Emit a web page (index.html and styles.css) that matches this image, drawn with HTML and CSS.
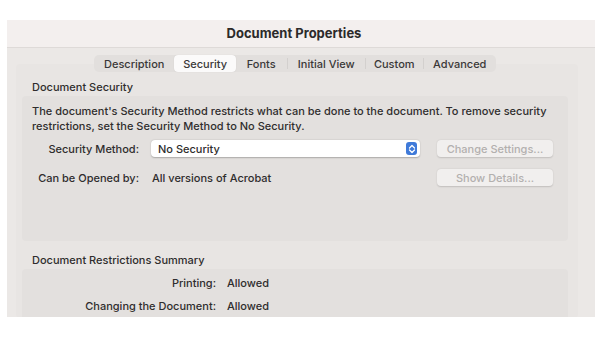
FILE: index.html
```html
<!DOCTYPE html>
<html lang="en">
  <head>
    <meta charset="UTF-8">
    <title>Document Properties</title>
    <link rel="stylesheet" href="styles.css">
  </head>
  <body>
    <div class="window">
      <div class="titlebar">Document Properties</div>

      <div class="tab-area">
        <div class="tabs">
          <div class="tab">Description</div>
          <div class="tab selected">Security</div>
          <div class="tab">Fonts</div>
          <div class="tab sep">Initial View</div>
          <div class="tab sep">Custom</div>
          <div class="tab sep">Advanced</div>
        </div>

        <div class="panel">
          <div class="section-title">Document Security</div>
          <div class="group security-group">
            <p class="note">The document's Security Method restricts what can be done to the document. To remove security restrictions, set the Security Method to No Security.</p>

            <div class="row">
              <span class="label">Security Method:</span>
              <div class="popup">
                <span>No Security</span>
                <span class="stepper">
                  <svg width="8" height="10" viewBox="0 0 8 10">
                    <path d="M1.5 4 L4 1.5 L6.5 4" fill="none" stroke="#fff" stroke-width="1.3" stroke-linecap="round" stroke-linejoin="round"/>
                    <path d="M1.5 6 L4 8.5 L6.5 6" fill="none" stroke="#fff" stroke-width="1.3" stroke-linecap="round" stroke-linejoin="round"/>
                  </svg>
                </span>
              </div>
              <button class="btn" disabled>Change Settings...</button>
            </div>

            <div class="row">
              <span class="label">Can be Opened by:</span>
              <span class="value">All versions of Acrobat</span>
              <button class="btn" disabled>Show Details...</button>
            </div>
          </div>

          <div class="section-title">Document Restrictions Summary</div>
          <div class="group summary-group">
            <div class="summary-row">
              <span class="summary-label">Printing:</span>
              <span>Allowed</span>
            </div>
            <div class="summary-row">
              <span class="summary-label">Changing the Document:</span>
              <span>Allowed</span>
            </div>
          </div>
        </div>
      </div>
    </div>
  </body>
</html>
```

FILE: styles.css
```css
body {
  margin: 0;
  background-color: #ffffff;
  font-family: Inter, "Liberation Sans", sans-serif;
  font-size: 11px;
  color: #2f2d2d;
}

.window {
  margin: 20px 0 0 7px;
  width: 588px;
  height: 297px;
  background-color: #ebe8e6;
  overflow: hidden;
}

.titlebar {
  height: 27px;
  line-height: 27px;
  padding-right: 14px;
  text-align: center;
  font-size: 13px;
  font-weight: 700;
  color: #2b2a2a;
  background-color: #f3efee;
  border-bottom: 1px solid #dedad8;
}

.tab-area {
  padding: 7px 17px 0 9px;
}

.tabs {
  position: relative;
  z-index: 1;
  display: flex;
  width: 402px;
  height: 17px;
  margin-left: 78px;
  background-color: #e2dfdd;
  border-radius: 5px;
}

.tab {
  display: flex;
  align-items: center;
  justify-content: center;
  font-weight: 500;
  color: #3a3838;
}

.tab:nth-child(1) { width: 81px; }
.tab:nth-child(2) { width: 62px; }
.tab:nth-child(3) { width: 51px; }
.tab:nth-child(4) { width: 78px; }
.tab:nth-child(5) { width: 57px; }
.tab:nth-child(6) { width: 73px; }

.tab.selected {
  background-color: #fbfafa;
  border-radius: 4px;
  box-shadow: 0 0 1px rgba(0, 0, 0, 0.15);
}

.tab.sep {
  border-left: 1px solid #d3d0ce;
  margin-top: 3px;
  margin-bottom: 3px;
}

.panel {
  margin-top: -8px;
  height: 240px;
  padding: 14px 10px 0 6px;
  background-color: #e8e5e3;
  border-radius: 4px;
}

.section-title {
  padding-left: 10px;
  height: 18px;
  line-height: 18px;
  font-weight: 500;
}

.group {
  background-color: #e3e0de;
  border-radius: 4px;
}

.security-group {
  height: 137px;
  padding: 8px 15px 0 10px;
  margin-bottom: 10px;
}

.note {
  margin: 0 0 6px 0;
  line-height: 15px;
  font-weight: 500;
}

.row {
  display: flex;
  align-items: center;
  height: 17px;
  margin-bottom: 12px;
  font-weight: 500;
}

.label {
  width: 107px;
  text-align: right;
  padding-right: 12px;
}

.value {
  width: 270px;
  padding-left: 1px;
}

.popup {
  display: flex;
  align-items: center;
  justify-content: space-between;
  width: 259px;
  height: 17px;
  padding: 0 3px 0 7px;
  background-color: #ffffff;
  border-radius: 4px;
  box-shadow: 0 0.5px 1.5px rgba(0, 0, 0, 0.25);
}

.stepper {
  display: flex;
  align-items: center;
  justify-content: center;
  width: 11px;
  height: 13px;
  background-color: #3f7ad9;
  border-radius: 3px;
}

.btn {
  margin-left: auto;
  width: 116px;
  height: 17px;
  padding: 0;
  font-family: inherit;
  font-size: 11px;
  font-weight: 500;
  color: #b3b0ae;
  background-color: #f1efee;
  border: none;
  border-radius: 4px;
  box-shadow: 0 0.5px 1.5px rgba(0, 0, 0, 0.15);
}

.summary-group {
  height: 60px;
  padding-top: 2px;
}

.summary-row {
  display: flex;
  height: 23px;
  align-items: center;
  font-weight: 500;
}

.summary-label {
  width: 194px;
  text-align: right;
  padding-right: 11px;
}
```
